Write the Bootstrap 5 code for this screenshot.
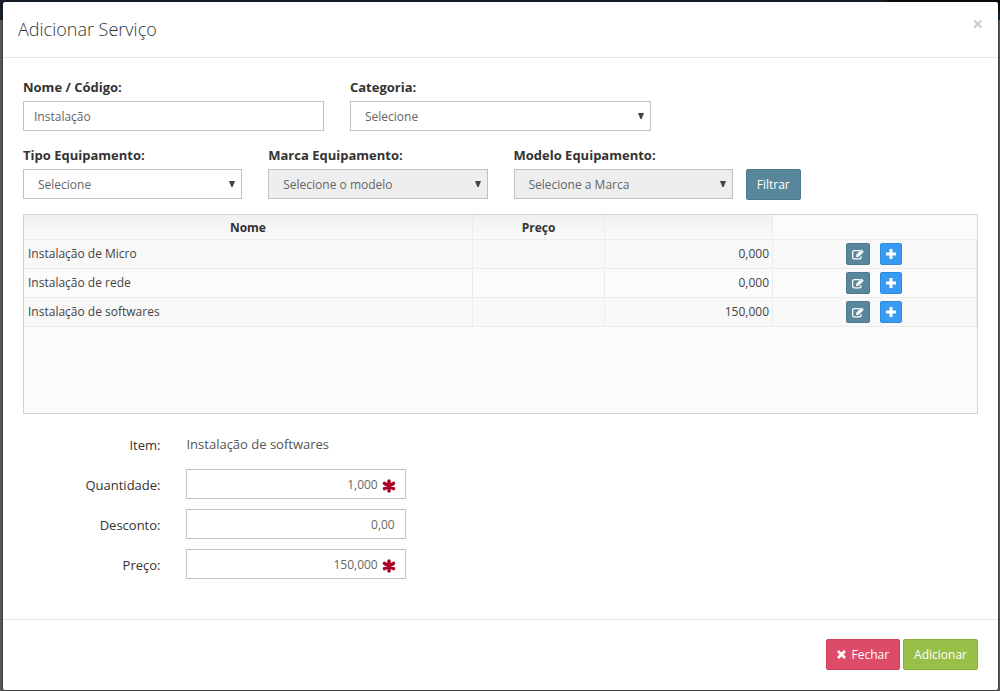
<!DOCTYPE html>
<html lang="pt-BR">
<head>
<meta charset="utf-8">
<meta name="viewport" content="width=device-width, initial-scale=1">
<title>Adicionar Serviço</title>
<link href="https://cdn.jsdelivr.net/npm/bootstrap@5.3.0/dist/css/bootstrap.min.css" rel="stylesheet">
<style>
  body {
    font: 13px/20px "Open Sans", sans-serif;
    color: #333;
    min-height: 100vh;
    padding: 2px 2px 1px 3px;
    background:
      linear-gradient(#0c0c0c, #0c0c0c) no-repeat right top / 113px 11px,
      linear-gradient(#18212b 20px, #595959 20px);
  }
  .service-dialog { min-height: calc(100vh - 3px); border-radius: 2px; box-shadow: 0 0 2px #000; }
  .dialog-head { height: 56px; padding: 0 15px 2px; border-bottom: 1px solid #e5e5e5; }
  .dialog-title { font-size: 18px; line-height: 24px; font-weight: 300; }
  .dismiss { font-size: 19px; line-height: 20px; font-weight: 700; color: #ccc; margin-top: 12px; }
  .dialog-content { padding: 19px 20px 20px; }
  .dialog-foot { height: 71px; padding: 19px 20px; gap: 3px; border-top: 1px solid #e5e5e5; }

  .form-grid { --bs-gutter-x: 26px; }
  .filter-line { padding: 14px 0; }
  .field-label { display: block; font-weight: 700; margin-bottom: 4px; }
  .form-control, .form-select {
    height: 30px; font-size: 12px; line-height: 18px; color: #666;
    border: 1px solid #c2c2c2; border-radius: 0; padding: 5px 10px;
  }
  .form-select {
    padding: 6px 14px 4px;
    background: #fff url("data:image/svg+xml,%3Csvg xmlns='http://www.w3.org/2000/svg' viewBox='0 0 6 6'%3E%3Cpath d='M0 0h6L3.6 6H2.4z' fill='%23444'/%3E%3C/svg%3E") no-repeat right 6px top 11px / 6px 6px;
  }
  .form-select:disabled { background-color: #eee; color: #666; opacity: 1; }
  .form-lines { row-gap: 10px; padding-top: 15px; }
  .form-lines .row { min-height: 30px; }
  .line-label { display: block; text-align: right; padding-top: 6px; color: #333; }
  .line-text { font-size: 13px; padding-top: 5px; color: #555; }
  .required-value { padding-right: 27px; }
  .required-mark { top: 10px; right: 23px; width: 14px; height: 14px; }

  .btn { font-size: 12px; line-height: 19px; padding: 5px 10px; border-radius: 2px; color: #fff; }
  .btn-slate { background: #58879b; border-color: #4b7a8e; }
  .btn-sky { background: #389af0; border-color: #2b8ce2; }
  .btn-rose { background: #de4b68; border-color: #cf405c; }
  .btn-leaf { background: #98bf48; border-color: #88af38; }
  .btn-gap { gap: 5px; }
  .btn-cell { height: 22px; padding: 0 5px; display: inline-flex; align-items: center; }
  .cell-actions { gap: 10px; padding-right: 2px; }

  .service-list { height: 200px; background: #fbfbfb; border: 1px solid #d5d6c9; overflow: auto; }
  .service-table { width: 100%; table-layout: fixed; border-collapse: separate; border-spacing: 0; font-size: 12px; color: #444; }
  .service-table th { height: 25px; padding: 2px 4px 0; text-align: center; font-weight: 700; color: #333;
    border: solid #ececec; border-width: 0 1px 1px 0; background: linear-gradient(#f0f0f0, #fbfbfb); }
  .service-table td { height: 29px; padding: 0 3px 0 4px; border: solid #ececec; border-width: 0 1px 1px 0; }
  .service-table .no-head { height: 25px; background: #fbfbfb; border-right-color: #fbfbfb; }
  .service-table tbody tr:nth-child(odd) { background: #f8f8f8; }
  .col-name { width: 47.1%; } .col-price { width: 13.9%; } .col-value { width: 17.6%; }
</style>
</head>
<body>
<svg class="d-none" aria-hidden="true">
  <symbol id="i-edit" viewBox="0 0 13 11">
    <path d="M8.500 1.200H2.500A1.800 1.800 0 0 0 .7 3v5.500a1.800 1.800 0 0 0 1.800 1.800H8a1.800 1.800 0 0 0 1.800-1.800V7.300" fill="none" stroke="currentColor" stroke-width="1.400"/>
    <path d="M4.500 8.300V5.900L10.300.2l2.500 2.400L7 8.300z" fill="currentColor"/>
    <path d="M5.400 6.300l1.200 1.200M9.400 1.900l1.700 1.700" stroke="#58879b" stroke-width=".6"/>
  </symbol>
  <symbol id="i-plus" viewBox="0 0 10 10"><path d="M3.500 0h3v3.500H10v3H6.500V10h-3V6.500H0v-3h3.500z" fill="currentColor"/></symbol>
  <symbol id="i-star" viewBox="0 0 14 14"><path d="M7 2v10M2.500 4.400l9 5.200M11.500 4.400l-9 5.200" stroke="#a90329" stroke-width="3.500" stroke-linecap="round"/></symbol>
  <symbol id="i-close" viewBox="0 0 10 10"><path d="M2.200 2.200l5.600 5.600M7.800 2.200L2.200 7.800" stroke="currentColor" stroke-width="3" stroke-linecap="square"/></symbol>
</svg>

<main class="service-dialog bg-white d-flex flex-column">
  <header class="dialog-head d-flex align-items-center justify-content-between">
    <h1 class="dialog-title m-0">Adicionar Serviço</h1>
    <button type="button" class="dismiss border-0 bg-transparent p-0 align-self-start" aria-label="Fechar janela">×</button>
  </header>

  <div class="dialog-content flex-grow-1">
    <div class="row form-grid">
      <div class="col-4">
        <label class="field-label" for="nome">Nome / Código:</label>
        <input class="form-control" id="nome" type="text" value="Instalação">
      </div>
      <div class="col-4">
        <label class="field-label" for="categoria">Categoria:</label>
        <select class="form-select" id="categoria"><option>Selecione</option></select>
      </div>
    </div>

    <div class="filter-line">
      <div class="row form-grid">
        <div class="col-3">
          <label class="field-label" for="tipo">Tipo Equipamento:</label>
          <select class="form-select" id="tipo"><option>Selecione</option></select>
        </div>
        <div class="col-3">
          <label class="field-label" for="marca">Marca Equipamento:</label>
          <select class="form-select" id="marca" disabled><option>Selecione o modelo</option></select>
        </div>
        <div class="col-3">
          <label class="field-label" for="modelo">Modelo Equipamento:</label>
          <select class="form-select" id="modelo" disabled><option>Selecione a Marca</option></select>
        </div>
        <div class="col-auto p-0 pt-4">
          <button type="button" class="btn btn-slate">Filtrar</button>
        </div>
      </div>
    </div>

    <div class="service-list">
      <table class="service-table">
        <colgroup><col class="col-name"><col class="col-price"><col class="col-value"><col></colgroup>
        <thead><tr><th>Nome</th><th>Preço</th><th></th><td class="no-head"></td></tr></thead>
        <tbody>
          <tr><td>Instalação de Micro</td><td></td><td class="text-end">0,000</td><td><div class="cell-actions d-flex justify-content-center"><button type="button" class="btn btn-slate btn-cell" aria-label="Editar"><svg width="12" height="11"><use href="#i-edit"/></svg></button><button type="button" class="btn btn-sky btn-cell" aria-label="Adicionar item"><svg width="10" height="10"><use href="#i-plus"/></svg></button></div></td></tr>
          <tr><td>Instalação de rede</td><td></td><td class="text-end">0,000</td><td><div class="cell-actions d-flex justify-content-center"><button type="button" class="btn btn-slate btn-cell" aria-label="Editar"><svg width="12" height="11"><use href="#i-edit"/></svg></button><button type="button" class="btn btn-sky btn-cell" aria-label="Adicionar item"><svg width="10" height="10"><use href="#i-plus"/></svg></button></div></td></tr>
          <tr><td>Instalação de softwares</td><td></td><td class="text-end">150,000</td><td><div class="cell-actions d-flex justify-content-center"><button type="button" class="btn btn-slate btn-cell" aria-label="Editar"><svg width="12" height="11"><use href="#i-edit"/></svg></button><button type="button" class="btn btn-sky btn-cell" aria-label="Adicionar item"><svg width="10" height="10"><use href="#i-plus"/></svg></button></div></td></tr>
        </tbody>
      </table>
    </div>

    <div class="form-lines d-flex flex-column">
      <div class="row form-grid">
        <div class="col-2"><span class="line-label">Item:</span></div>
        <div class="col-3"><div class="line-text">Instalação de softwares</div></div>
      </div>
      <div class="row form-grid">
        <div class="col-2"><label class="line-label" for="quantidade">Quantidade:</label></div>
        <div class="col-3 position-relative"><input class="form-control text-end required-value" id="quantidade" type="text" value="1,000" required><svg class="required-mark position-absolute"><use href="#i-star"/></svg></div>
      </div>
      <div class="row form-grid">
        <div class="col-2"><label class="line-label" for="desconto">Desconto:</label></div>
        <div class="col-3"><input class="form-control text-end" id="desconto" type="text" value="0,00"></div>
      </div>
      <div class="row form-grid">
        <div class="col-2"><label class="line-label" for="preco">Preço:</label></div>
        <div class="col-3 position-relative"><input class="form-control text-end required-value" id="preco" type="text" value="150,000" required><svg class="required-mark position-absolute"><use href="#i-star"/></svg></div>
      </div>
    </div>
  </div>

  <footer class="dialog-foot d-flex justify-content-end align-items-start">
    <button type="button" class="btn btn-rose btn-gap d-inline-flex align-items-center"><svg width="9" height="9"><use href="#i-close"/></svg>Fechar</button>
    <button type="button" class="btn btn-leaf">Adicionar</button>
  </footer>
</main>
<script src="https://cdn.jsdelivr.net/npm/bootstrap@5.3.0/dist/js/bootstrap.bundle.min.js"></script>
</body>
</html>
